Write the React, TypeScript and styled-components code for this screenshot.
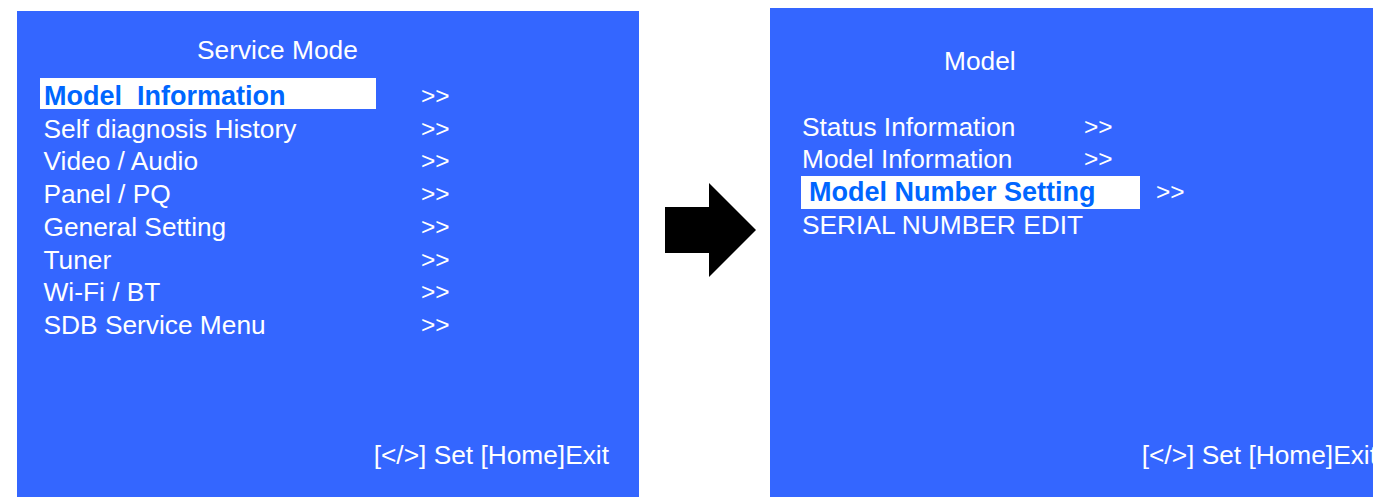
import styled, { createGlobalStyle } from "styled-components";

const GlobalStyle = createGlobalStyle`
  html, body {
    margin: 0;
    padding: 0;
    background: #ffffff;
    overflow: hidden;
  }
  body {
    font-family: "Liberation Sans", Arial, sans-serif;
  }
`;

const ROW = 32.7;

const Page = styled.div`
  display: flex;
  align-items: flex-start;
  width: 1373px;
  height: 497px;
  overflow: hidden;
`;

const Screen = styled.section<{ $top: number; $left: number; $width: number }>`
  flex-shrink: 0;
  display: flex;
  flex-direction: column;
  box-sizing: border-box;
  margin-top: ${(p) => p.$top}px;
  margin-left: ${(p) => p.$left}px;
  width: ${(p) => p.$width}px;
  height: ${(p) => 497 - p.$top}px;
  padding-bottom: 25.6px;
  background: #3466ff;
  color: #ffffff;
  font-size: 26.3px;
`;

const Title = styled.div<{ $top: number; $indent: number }>`
  margin-top: ${(p) => p.$top}px;
  padding-left: ${(p) => p.$indent}px;
  line-height: ${ROW}px;
  height: ${ROW}px;
  white-space: pre;
`;

const Menu = styled.ul<{ $top: number; $indent: number }>`
  list-style: none;
  margin: ${(p) => p.$top}px 0 0 0;
  padding: 0 0 0 ${(p) => p.$indent}px;
`;

const Row = styled.li`
  display: flex;
  align-items: flex-start;
  height: ${ROW}px;
`;

const Label = styled.span<{
  $width: number;
  $pad: number;
  $selected?: boolean;
  $boxH?: number;
  $lift?: number;
}>`
  display: block;
  box-sizing: border-box;
  flex-shrink: 0;
  width: ${(p) => p.$width}px;
  padding-left: ${(p) => p.$pad}px;
  white-space: pre;
  height: ${(p) => (p.$selected ? p.$boxH : ROW)}px;
  line-height: ${(p) =>
    p.$selected ? ROW + 2 * (p.$lift || 0) : ROW}px;
  margin-top: ${(p) => (p.$selected ? -(p.$lift || 0) : 0)}px;
  background: ${(p) => (p.$selected ? "#ffffff" : "transparent")};
  color: ${(p) => (p.$selected ? "#0066ff" : "#ffffff")};
  font-weight: ${(p) => (p.$selected ? 700 : 400)};
  font-size: ${(p) => (p.$selected ? "27px" : "inherit")};
`;

const Chevrons = styled.span<{ $gap: number }>`
  margin-left: ${(p) => p.$gap}px;
  line-height: ${ROW}px;
  font-size: 24.5px;
`;

const Footer = styled.div<{ $right: number }>`
  margin-top: auto;
  padding-right: ${(p) => p.$right}px;
  text-align: right;
  line-height: ${ROW}px;
  white-space: pre;
`;

const ArrowSlot = styled.div`
  flex-shrink: 0;
  width: 131px;
  box-sizing: border-box;
  padding: 183px 0 0 26px;
  display: flex;
`;

type Item = {
  label: string;
  more?: boolean;
  selected?: boolean;
  width: number;
  gap: number;
  pad: number;
};

const serviceItems: Item[] = [
  { label: "Model  Information", more: true, selected: true, width: 336, gap: 45, pad: 4 },
  { label: "Self diagnosis History", more: true, width: 381, gap: 0, pad: 3.5 },
  { label: "Video / Audio", more: true, width: 381, gap: 0, pad: 3.5 },
  { label: "Panel / PQ", more: true, width: 381, gap: 0, pad: 3.5 },
  { label: "General Setting", more: true, width: 381, gap: 0, pad: 3.5 },
  { label: "Tuner", more: true, width: 381, gap: 0, pad: 3.5 },
  { label: "Wi-Fi / BT", more: true, width: 381, gap: 0, pad: 3.5 },
  { label: "SDB Service Menu", more: true, width: 381, gap: 0, pad: 3.5 },
];

const modelItems: Item[] = [
  { label: "Status Information", more: true, width: 283, gap: 0, pad: 1 },
  { label: "Model Information", more: true, width: 283, gap: 0, pad: 1 },
  { label: "Model Number Setting", more: true, selected: true, width: 339, gap: 16, pad: 8 },
  { label: "SERIAL NUMBER EDIT", width: 339, gap: 0, pad: 1 },
];

const MenuList = ({
  items,
  top,
  indent,
  boxH,
  lift,
}: {
  items: Item[];
  top: number;
  indent: number;
  boxH: number;
  lift: number;
}) => (
  <Menu $top={top} $indent={indent}>
    {items.map((it) => (
      <Row key={it.label}>
        <Label
          $width={it.width}
          $pad={it.pad}
          $selected={it.selected}
          $boxH={boxH}
          $lift={lift}
        >
          {it.label}
        </Label>
        {it.more && <Chevrons $gap={it.gap}>&gt;&gt;</Chevrons>}
      </Row>
    ))}
  </Menu>
);

const NextArrow = () => (
  <svg width="91" height="94" viewBox="0 0 91 94">
    <polygon points="0,24 44,24 44,0 91,47 44,94 44,70 0,70" fill="#000000" />
  </svg>
);

export default function App() {
  return (
    <>
      <GlobalStyle />
      <Page>
        <Screen $top={11} $left={17} $width={622}>
          <Title $top={22.6} $indent={180}>
            Service Mode
          </Title>
          <MenuList items={serviceItems} top={13.8} indent={23} boxH={31} lift={2} />
          <Footer $right={30}>[&lt;/&gt;] Set [Home]Exit</Footer>
        </Screen>
        <ArrowSlot>
          <NextArrow />
        </ArrowSlot>
        <Screen $top={8} $left={0} $width={637}>
          <Title $top={37} $indent={174}>
            Model
          </Title>
          <MenuList items={modelItems} top={33} indent={31} boxH={33} lift={0.5} />
          <Footer $right={30}>[&lt;/&gt;] Set [Home]Exit</Footer>
        </Screen>
      </Page>
    </>
  );
}
